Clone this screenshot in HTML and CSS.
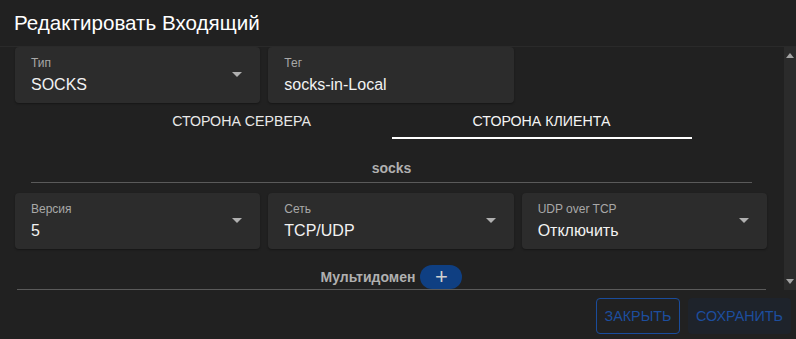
FILE: index.html
```html
<!DOCTYPE html>
<html lang="ru">
<head>
  <meta charset="UTF-8" />
  <title>Редактировать Входящий</title>
  <link rel="stylesheet" href="styles.css">
</head>
<body>
  <div class="dialog">
    <div class="dialog-title">Редактировать Входящий</div>

    <div class="dialog-body">
      <div class="scroll-area">
        <div class="field-row">
          <div class="field select">
            <div class="label">Тип</div>
            <div class="value">SOCKS</div>
            <span class="caret"></span>
          </div>
          <div class="field">
            <div class="label">Тег</div>
            <div class="value">socks-in-Local</div>
          </div>
        </div>

        <div class="tabs">
          <div class="tab">Сторона сервера</div>
          <div class="tab active">Сторона клиента</div>
        </div>

        <div class="section-title">socks</div>

        <div class="field-row second">
          <div class="field select">
            <div class="label">Версия</div>
            <div class="value">5</div>
            <span class="caret"></span>
          </div>
          <div class="field select">
            <div class="label">Сеть</div>
            <div class="value">TCP/UDP</div>
            <span class="caret"></span>
          </div>
          <div class="field select">
            <div class="label">UDP over TCP</div>
            <div class="value">Отключить</div>
            <span class="caret"></span>
          </div>
        </div>

        <div class="multi">
          <span>Мультидомен</span>
          <button class="add-btn">+</button>
        </div>
      </div>

      <div class="scrollbar">
        <span class="arrow up"></span>
        <span class="arrow down"></span>
      </div>
    </div>

    <div class="dialog-actions">
      <button class="btn outlined">Закрыть</button>
      <button class="btn tonal">Сохранить</button>
    </div>
  </div>
</body>
</html>
```

FILE: styles.css
```css
* {
  margin: 0;
  padding: 0;
  box-sizing: border-box;
}
body {
  font-family: 'Liberation Sans', Arial, sans-serif;
  background: #212121;
  color: #fff;
}
.dialog {
  width: 796px;
  height: 339px;
  background: #212121;
  display: flex;
  flex-direction: column;
}
.dialog-title {
  height: 47px;
  padding: 11px 14px 0;
  font-size: 20.6px;
  line-height: 24px;
  border-bottom: 1px solid #2a2a2a;
}
.dialog-body {
  height: 243px;
  display: flex;
}
.scroll-area {
  flex: 1;
  padding: 0 16px 0 15px;
  overflow: hidden;
}
.field-row {
  display: grid;
  grid-template-columns: repeat(3, 1fr);
  gap: 8px;
  margin-right: 1px;
}
.field-row.second {
  margin-top: 10px;
}
.field {
  position: relative;
  height: 56px;
  background: #2c2c2c;
  border-radius: 4px;
  padding: 9px 16px 0;
  box-shadow: 0 1px 2px rgba(0, 0, 0, 0.35);
}
.label {
  font-size: 12px;
  line-height: 15px;
  color: #a8a8a8;
}
.value {
  font-size: 16px;
  line-height: 22px;
  margin-top: 3px;
  color: #f2f2f2;
}
.caret {
  position: absolute;
  right: 18px;
  top: 25px;
  border-left: 5px solid transparent;
  border-right: 5px solid transparent;
  border-top: 5px solid #b0b0b0;
}
.tabs {
  display: flex;
  justify-content: center;
  height: 36px;
}
.tab {
  width: 300px;
  text-align: center;
  font-size: 14.2px;
  line-height: 36px;
  text-transform: uppercase;
  color: #e8e8e8;
}
.tab.active {
  color: #f4f4f4;
  box-shadow: inset 0 -2px 0 #fff;
}
.section-title {
  margin: 0 16px 0 16px;
  padding: 20px 0 5px;
  text-align: center;
  font-size: 14px;
  line-height: 18px;
  font-weight: bold;
  color: #b0b0b0;
  border-bottom: 1px solid #5a5a5a;
}
.multi {
  margin: 0 2px;
  padding-top: 16px;
  height: 41px;
  display: flex;
  justify-content: center;
  align-items: flex-start;
  gap: 5px;
  border-bottom: 1px solid #5a5a5a;
  font-size: 14px;
  font-weight: bold;
  color: #b0b0b0;
}
.multi span {
  line-height: 24px;
}
.add-btn {
  width: 42px;
  height: 24px;
  border: none;
  border-radius: 12px;
  background: #0f3f82;
  color: #d0d0d0;
  font-family: 'Liberation Sans', Arial, sans-serif;
  font-size: 22px;
  line-height: 24px;
}
.scrollbar {
  position: relative;
  width: 12px;
  background: #2b2b2b;
}
.arrow {
  position: absolute;
  left: 2px;
  border-left: 4px solid transparent;
  border-right: 4px solid transparent;
}
.arrow.up {
  top: 6px;
  border-bottom: 5px solid #a3a3a3;
}
.arrow.down {
  bottom: 6px;
  border-top: 5px solid #a3a3a3;
}
.dialog-actions {
  flex: 1;
  display: flex;
  justify-content: flex-end;
  align-items: flex-start;
  gap: 8px;
  padding: 8px 5px 0;
}
.btn {
  height: 36px;
  border-radius: 4px;
  font-family: 'Liberation Sans', Arial, sans-serif;
  font-size: 14.3px;
  text-transform: uppercase;
  color: #1d4e9e;
  background: none;
  border: 1px solid transparent;
}
.btn.outlined {
  width: 84px;
  border-color: #1a4c9c;
}
.btn.tonal {
  width: 103px;
  background: #1e232b;
}
```
